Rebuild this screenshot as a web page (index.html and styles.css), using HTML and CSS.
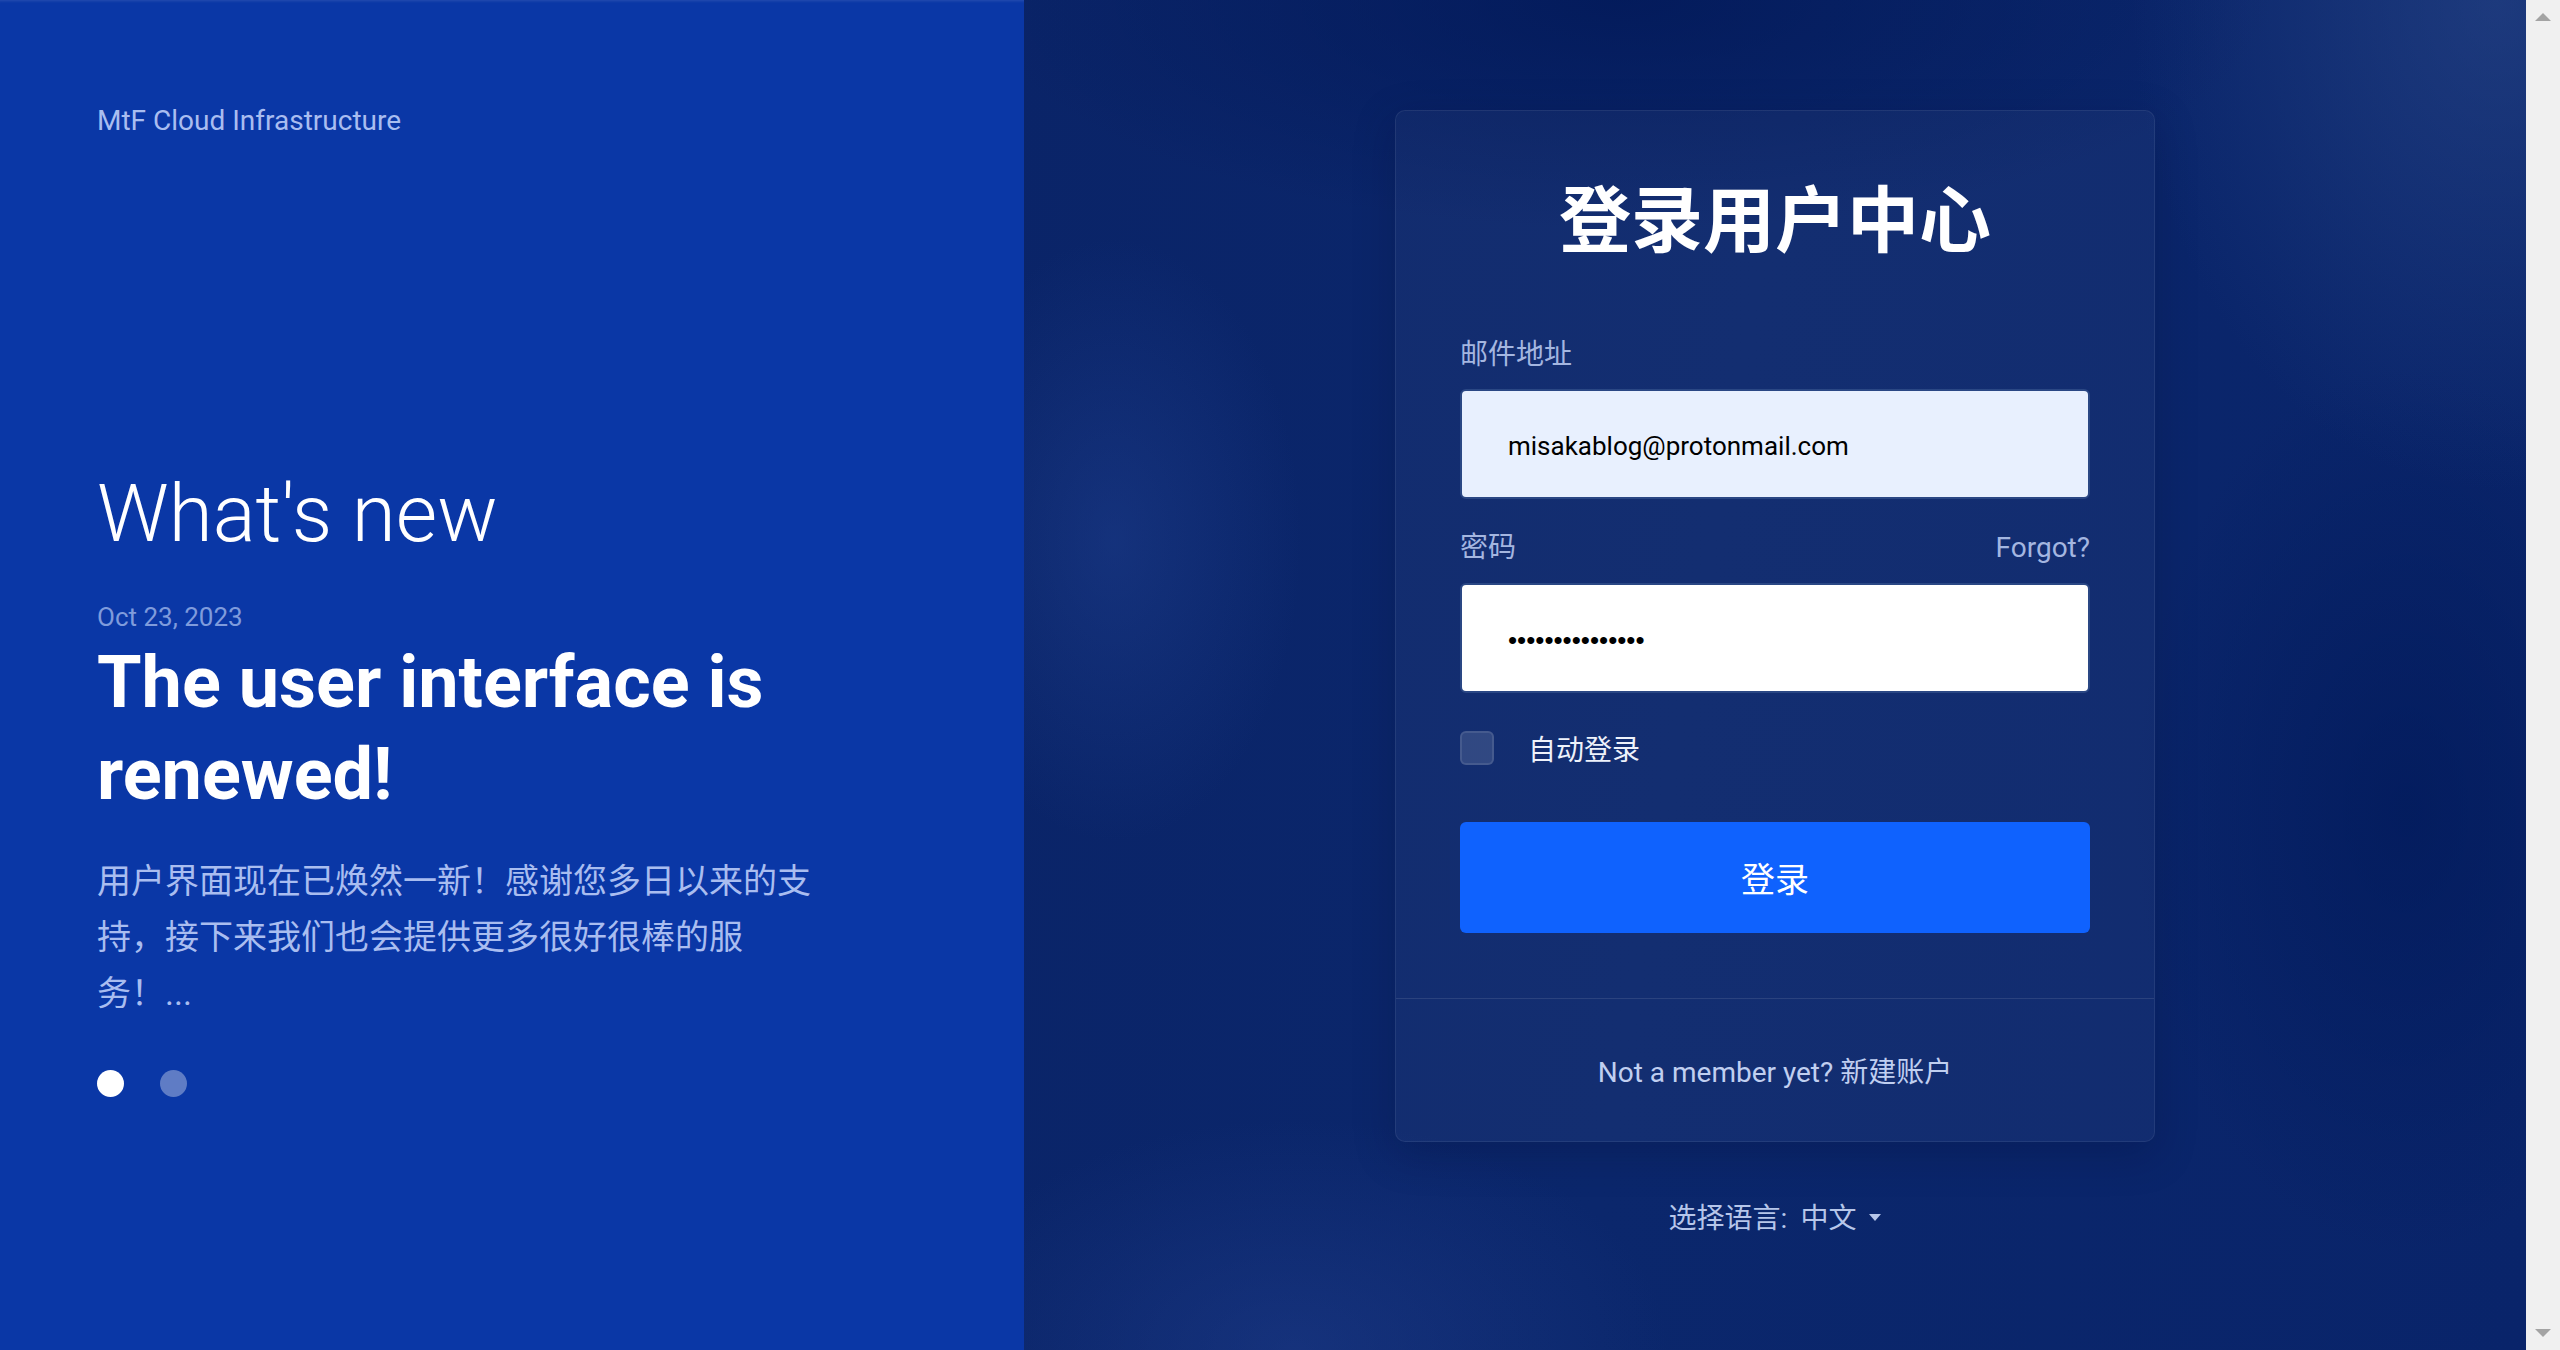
FILE: index.html
```html
<!DOCTYPE html>
<html lang="zh-CN">
<head>
<meta charset="utf-8">
<title>登录用户中心 - MtF Cloud Infrastructure</title>
<link rel="stylesheet" href="styles.css">
</head>
<body>
<div class="page">
  <aside class="intro">
    <div class="brand">MtF Cloud Infrastructure</div>
    <section class="news">
      <h1 class="news-title">What's new</h1>
      <div class="news-date">Oct 23, 2023</div>
      <h2 class="news-head">The user interface is renewed!</h2>
      <p class="news-body">用户界面现在已焕然一新！感谢您多日以来的支持，接下来我们也会提供更多很好很棒的服务！...</p>
      <div class="dots"><span class="dot active"></span><span class="dot"></span></div>
    </section>
  </aside>
  <main class="stage">
    <form class="card" onsubmit="return false">
      <div class="card-body">
        <h1 class="card-title">登录用户中心</h1>
        <label class="field-label" for="email">邮件地址</label>
        <input class="field autofill" id="email" type="text" value="misakablog@protonmail.com">
        <div class="label-row"><label class="field-label" for="pwd">密码</label><a class="forgot" href="#">Forgot?</a></div>
        <input class="field pwd" id="pwd" type="password" value="misakablog12345">
        <label class="remember"><span class="check"></span><span class="remember-text">自动登录</span></label>
        <button class="submit" type="submit">登录</button>
      </div>
      <div class="card-foot">Not a member yet? <a href="#" class="signup">新建账户</a></div>
    </form>
    <div class="lang">选择语言: <span class="lang-value">中文</span><span class="caret"></span></div>
  </main>
  <div class="scrollbar"><span class="arrow up"></span><span class="arrow down"></span></div>
</div>
</body>
</html>
```
FILE: styles.css
```css
html, body {
  margin: 0;
  padding: 0;
  height: 100%;
}
body {
  font-family: Roboto, "Noto Sans CJK SC", sans-serif;
  overflow: hidden;
  background: #0a2569;
}
.page {
  display: flex;
  height: 1350px;
}

/* left intro panel */
.intro {
  width: 1024px;
  flex: none;
  box-sizing: border-box;
  padding: 101px 0 0 97px;
  background: #0a37a6;
  box-shadow: inset 0 3px 3px -2px rgba(255, 255, 255, 0.12);
}
.brand {
  font-size: 28px;
  line-height: 40px;
  color: #a9bdf0;
}
.news {
  margin-top: 325px;
  max-width: 720px;
}
.news-title {
  margin: 0;
  font-size: 80px;
  font-weight: 300;
  line-height: 96px;
  color: #ffffff;
}
.news-date {
  margin-top: 37px;
  font-size: 26px;
  line-height: 36px;
  color: #7f9bdc;
}
.news-head {
  margin: 2px 0 0;
  font-size: 72px;
  font-weight: 700;
  line-height: 92px;
  color: #ffffff;
}
.news-body {
  margin: 32px 0 0;
  font-size: 34px;
  line-height: 56px;
  color: #a9bdf0;
}
.dots {
  margin-top: 49px;
  display: flex;
  gap: 36px;
}
.dot {
  width: 27px;
  height: 27px;
  border-radius: 50%;
  background: rgba(255, 255, 255, 0.35);
}
.dot.active {
  background: #ffffff;
}

/* right login stage */
.stage {
  flex: 1;
  display: flex;
  flex-direction: column;
  align-items: center;
  padding-top: 110px;
  background:
    radial-gradient(ellipse 520px 700px at 98% 0%, rgba(45, 75, 140, 0.55), transparent 70%),
    radial-gradient(ellipse 260px 420px at 6% 40%, rgba(40, 75, 160, 0.35), transparent 72%),
    radial-gradient(ellipse 520px 320px at 18% 100%, rgba(35, 65, 145, 0.45), transparent 72%),
    radial-gradient(ellipse 900px 320px at 40% 0%, rgba(0, 22, 85, 0.7), transparent 72%),
    radial-gradient(ellipse 380px 620px at 92% 60%, rgba(0, 24, 88, 0.65), transparent 72%),
    linear-gradient(100deg, #0a2468 0%, #0b276c 45%, #09246a 100%);
}
.card {
  width: 760px;
  box-sizing: border-box;
  border: 1px solid rgba(255, 255, 255, 0.07);
  border-radius: 10px;
  background: rgba(255, 255, 255, 0.035);
  box-shadow: 0 12px 40px rgba(0, 10, 50, 0.25);
}
.card-body {
  display: flex;
  flex-direction: column;
  padding: 61px 64px 65px;
}
.card-title {
  margin: 0;
  font-size: 72px;
  font-weight: 700;
  line-height: 100px;
  text-align: center;
  color: #ffffff;
}
.field-label {
  margin-top: 63px;
  font-size: 28px;
  line-height: 40px;
  color: #a4b6e0;
}
.field {
  margin-top: 14px;
  height: 110px;
  box-sizing: border-box;
  border: 2px solid #2a4784;
  border-radius: 6px;
  padding: 4px 46px 0;
  font-family: Roboto, sans-serif;
  font-size: 26px;
  color: #000000;
  background: #ffffff;
  outline: none;
}
.field.autofill {
  background: #e8f0fe;
}
.field.pwd {
  margin-top: 15px;
  font-family: "Liberation Sans", Arial, sans-serif;
  font-size: 26px;
}
.label-row {
  margin-top: 29px;
  display: flex;
  justify-content: space-between;
  align-items: baseline;
}
.label-row .field-label {
  margin-top: 0;
}
.forgot {
  font-size: 28px;
  line-height: 40px;
  color: #a4b6e0;
  text-decoration: none;
}
.remember {
  margin-top: 38px;
  height: 34px;
  display: flex;
  align-items: center;
  gap: 34px;
  font-size: 28px;
  color: #eef2fb;
}
.remember-text {
  line-height: 28px;
  padding-top: 6px;
}
.check {
  width: 34px;
  height: 34px;
  box-sizing: border-box;
  border: 2px solid rgba(255, 255, 255, 0.1);
  border-radius: 6px;
  background: rgba(255, 255, 255, 0.13);
}
.submit {
  margin-top: 57px;
  height: 111px;
  border: none;
  border-radius: 6px;
  background: #0f62fe;
  color: #ffffff;
  font-family: Roboto, "Noto Sans CJK SC", sans-serif;
  font-size: 34px;
}
.card-foot {
  border-top: 1px solid rgba(255, 255, 255, 0.1);
  padding: 54px 0 48px;
  font-size: 28px;
  line-height: 40px;
  text-align: center;
  color: #c0cff0;
}
.signup {
  color: #c0cff0;
  text-decoration: none;
}
.lang {
  margin-top: 57px;
  display: flex;
  align-items: center;
  font-size: 28px;
  line-height: 40px;
  color: #b6c6ea;
}
.lang-value {
  margin-left: 13px;
}
.caret {
  margin-left: 13px;
  margin-top: -4px;
  width: 0;
  height: 0;
  border-left: 6px solid transparent;
  border-right: 6px solid transparent;
  border-top: 7px solid #b6c6ea;
}

/* classic scrollbar gutter */
.scrollbar {
  width: 34px;
  flex: none;
  box-sizing: border-box;
  padding: 13px 0;
  display: flex;
  flex-direction: column;
  justify-content: space-between;
  align-items: center;
  background: #f0f0f0;
}
.arrow {
  width: 0;
  height: 0;
  border-left: 8px solid transparent;
  border-right: 8px solid transparent;
}
.arrow.up {
  border-bottom: 8px solid #a3a3a3;
}
.arrow.down {
  border-top: 8px solid #a3a3a3;
}
```
